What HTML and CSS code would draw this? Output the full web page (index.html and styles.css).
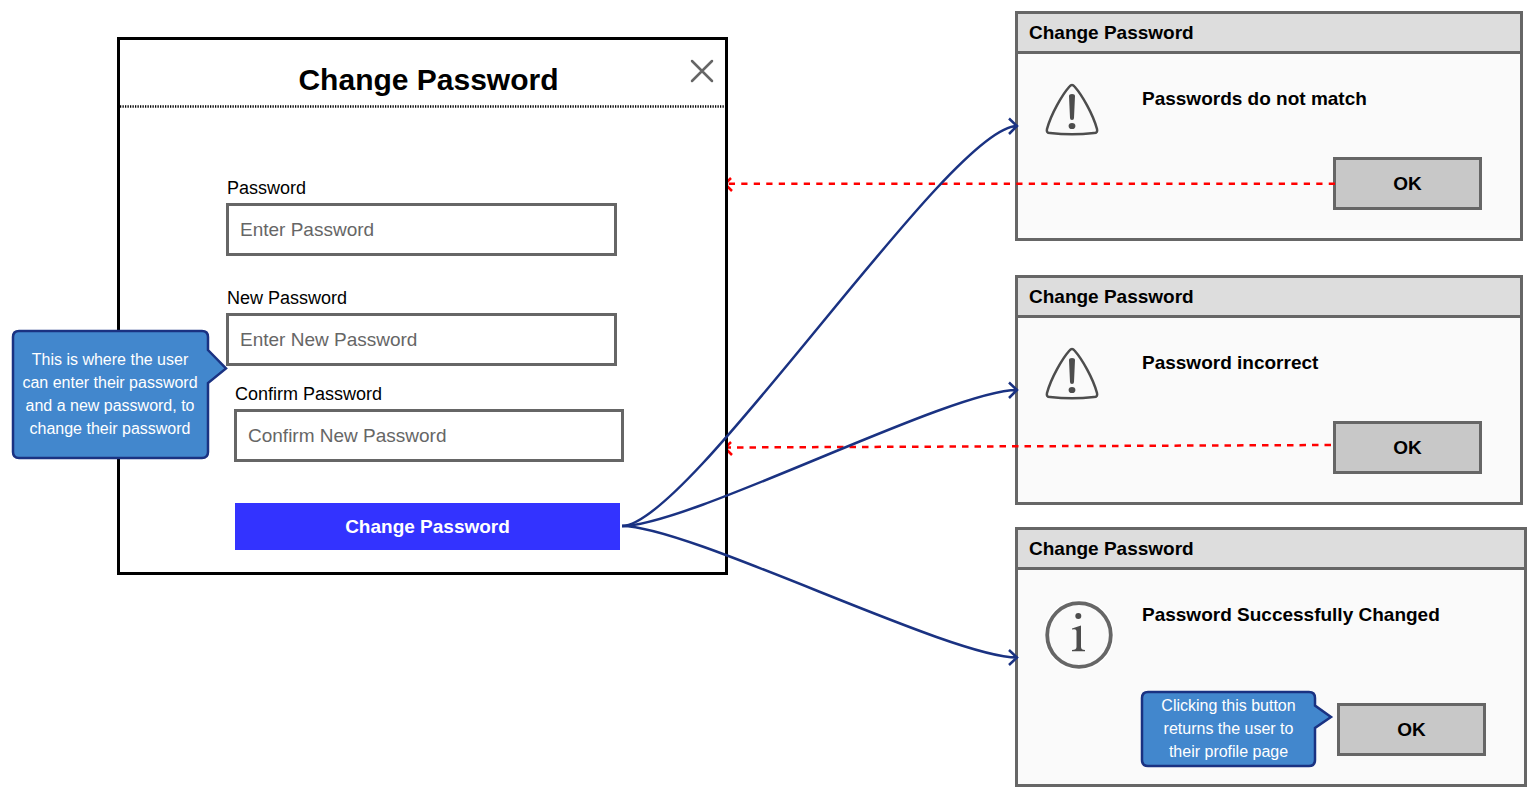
FILE: index.html
```html
<!DOCTYPE html>
<html lang="en">
<head>
<meta charset="utf-8">
<title>Change Password</title>
<link rel="stylesheet" href="styles.css">
</head>
<body>
<main class="canvas">
  <section class="alert alert-mismatch">
    <h2 class="alert-title">Change Password</h2>
    <div class="alert-body">
      <div class="alert-row">
        <svg class="icon" width="54" height="54" viewBox="0 0 54 54" aria-hidden="true">
          <path d="M24.500 3.500Q27 .500 29.500 3.500C37 12 48 31 52 46Q53 50 49 50Q27 52.500 5 50Q1 50 2 46C6 31 17 12 24.500 3.500Z" fill="#fafafa" stroke="#4d4d4d" stroke-width="2.500"/>
          <path d="M24 13Q24 11 27 11Q30 11 30 13L29 35Q29 37 27 37Q25 37 25 35Z" fill="#4d4d4d"/>
          <ellipse cx="27" cy="43" rx="3.400" ry="3.100" fill="#4d4d4d"/>
        </svg>
        <p class="message">Passwords do not match</p>
      </div>
      <button class="ok" type="button">OK</button>
    </div>
  </section>

  <section class="alert alert-incorrect">
    <h2 class="alert-title">Change Password</h2>
    <div class="alert-body">
      <div class="alert-row">
        <svg class="icon" width="54" height="54" viewBox="0 0 54 54" aria-hidden="true">
          <path d="M24.500 3.500Q27 .500 29.500 3.500C37 12 48 31 52 46Q53 50 49 50Q27 52.500 5 50Q1 50 2 46C6 31 17 12 24.500 3.500Z" fill="#fafafa" stroke="#4d4d4d" stroke-width="2.500"/>
          <path d="M24 13Q24 11 27 11Q30 11 30 13L29 35Q29 37 27 37Q25 37 25 35Z" fill="#4d4d4d"/>
          <ellipse cx="27" cy="43" rx="3.400" ry="3.100" fill="#4d4d4d"/>
        </svg>
        <p class="message">Password incorrect</p>
      </div>
      <button class="ok" type="button">OK</button>
    </div>
  </section>

  <section class="alert alert-success">
    <h2 class="alert-title">Change Password</h2>
    <div class="alert-body">
      <div class="alert-row">
        <svg class="icon" width="70" height="72" viewBox="0 0 70 72" aria-hidden="true">
          <circle cx="34" cy="36" r="35" fill="#fff"/>
          <circle cx="34" cy="36" r="31.800" fill="#fafafa" stroke="#666" stroke-width="3.800"/>
          <circle cx="33.300" cy="17" r="3" fill="#4d4d4d"/>
          <path d="M27 29.500L36 26.500V48Q36 51 40 51V52.200H27V51Q31.500 51 31.500 48V32Q31.500 29.500 27 30.500Z" fill="#4d4d4d"/>
        </svg>
        <p class="message">Password Successfully Changed</p>
      </div>
      <button class="ok" type="button">OK</button>
    </div>
  </section>

  <svg class="wires" width="1540" height="800" viewBox="0 0 1540 800" aria-hidden="true">
    <g fill="none" stroke="#f00" stroke-width="2.500">
      <path d="M1335 183.800H726" stroke-dasharray="6.250 6.250"/>
      <path d="M731 178L725 184L732 191"/>
      <path d="M1331 445L726 447.500" stroke-dasharray="6.500 6"/>
      <path d="M731 442L725 448L732 455"/>
    </g>
  </svg>

  <section class="dialog">
    <header class="dialog-header">
      <h1 class="dialog-title">Change Password</h1>
      <button class="close" type="button" aria-label="Close">
        <svg width="24" height="24" viewBox="0 0 24 24" aria-hidden="true"><path d="M2 2L22 22M22 2L2 22" stroke="#666" stroke-width="2.500" stroke-linecap="round"/></svg>
      </button>
    </header>
    <svg class="rule" width="100%" height="3" aria-hidden="true"><path d="M0 1.500H4000" stroke="#000" stroke-width="2.500" stroke-dasharray="1.250 1.250"/></svg>
    <form class="form">
      <div class="field">
        <label for="current">Password</label>
        <input id="current" type="password" placeholder="Enter Password">
      </div>
      <div class="field field-new">
        <label for="new">New Password</label>
        <input id="new" type="password" placeholder="Enter New Password">
      </div>
      <div class="field field-confirm">
        <label for="confirm">Confirm Password</label>
        <input id="confirm" type="password" placeholder="Confirm New Password">
      </div>
      <button class="submit" type="button">Change Password</button>
    </form>
  </section>

  <svg class="wires" width="1540" height="800" viewBox="0 0 1540 800" aria-hidden="true">
    <g fill="none" stroke="#1a3282" stroke-width="2.500">
      <path d="M622 526C689 526 950 126 1017 126M1009 118.500L1017 126L1009 134"/>
      <path d="M622 526C689 526 950 390 1017 390M1009 382.500L1017 390L1009 398"/>
      <path d="M622 526C689 526 950 657.500 1017 657.500M1009 650L1017 657.500L1009 665"/>
    </g>
  </svg>

  <aside class="callout callout-form">
    <svg class="bubble" width="218" height="132" viewBox="0 0 218 132" aria-hidden="true">
      <path d="M8 2H191Q197 2 197 8V21L215 39.500L197 54V123Q197 129 191 129H8Q2 129 2 123V8Q2 2 8 2Z" fill="#4287cd" stroke="#1a3282" stroke-width="2.500"/>
    </svg>
    <p>This is where the user can enter their password and a new password, to change their password</p>
  </aside>

  <aside class="callout callout-ok">
    <svg class="bubble" width="196" height="79" viewBox="0 0 196 79" aria-hidden="true">
      <path d="M8 2H169Q175 2 175 8V15.500L191 27L175 38V70Q175 76 169 76H8Q2 76 2 70V8Q2 2 8 2Z" fill="#4287cd" stroke="#1a3282" stroke-width="2.500"/>
    </svg>
    <p>Clicking this button returns the user to their profile page</p>
  </aside>
</main>
</body>
</html>
```
FILE: styles.css
```css
* {
  box-sizing: border-box;
}

body {
  margin: 0;
  background: #fff;
  color: #000;
  font-family: "Liberation Sans", Arial, sans-serif;
}

h1, h2, p {
  margin: 0;
}

button, input {
  font-family: inherit;
}

.canvas {
  position: relative;
  min-height: 800px;
  overflow: hidden;
}

.wires {
  position: absolute;
  left: 0;
  top: 0;
  pointer-events: none;
}

/* Main dialog */
.dialog {
  position: absolute;
  left: 117px;
  top: 37px;
  width: 611px;
  border: 3px solid #000;
  background: #fff;
}

.dialog-header {
  display: grid;
  grid-template-columns: 1fr 24px;
  align-items: center;
  height: 65px;
  padding: 0 11px 3px 47px;
}

.dialog-title {
  padding-top: 18px;
  font-size: 30px;
  line-height: 34px;
  text-align: center;
}

.close {
  display: flex;
  padding: 0;
  border: 0;
  background: none;
}

.rule {
  display: block;
}

.form {
  display: flex;
  flex-direction: column;
  padding: 69px 108px 22px 106px;
}

.field {
  display: flex;
  flex-direction: column;
  gap: 4px;
}

.field-new {
  margin-top: 31px;
}

.field-confirm {
  margin: 17px -7px 0 8px;
}

.field label {
  padding-left: 1px;
  font-size: 18px;
  line-height: 22px;
}

.field input {
  width: 100%;
  height: 53px;
  padding: 0 11px;
  border: 3px solid #666;
  background: #fff;
  color: #000;
  font-size: 19px;
}

.field input::placeholder {
  color: #666;
  opacity: 1;
}

.submit {
  height: 47px;
  margin: 41px -3px 0 9px;
  border: 0;
  background: #33f;
  color: #fff;
  font-size: 19px;
  font-weight: bold;
}

/* Alert boxes */
.alert {
  position: absolute;
  left: 1015px;
  display: flex;
  flex-direction: column;
  width: 508px;
  min-height: 230px;
  border: 3px solid #666;
  background: #fafafa;
}

.alert-mismatch {
  top: 11px;
}

.alert-incorrect {
  top: 275px;
}

.alert-success {
  top: 527px;
  width: 512px;
  min-height: 260px;
}

.alert-title {
  padding: 7px 11px;
  border-bottom: 3px solid #666;
  background: #ddd;
  font-size: 19px;
  line-height: 23px;
}

.alert-body {
  flex: 1;
  display: flex;
  flex-direction: column;
  justify-content: space-between;
  padding: 29px 38px 28px 27px;
}

.alert-row {
  display: grid;
  grid-template-columns: 97px 1fr;
}

.message {
  padding-top: 5px;
  font-size: 19px;
  line-height: 22px;
  font-weight: bold;
}

.ok {
  align-self: flex-end;
  width: 149px;
  height: 53px;
  border: 3px solid #666;
  background: #c8c8c8;
  color: #000;
  font-size: 19px;
  font-weight: bold;
}

/* Callouts */
.callout {
  position: absolute;
  display: flex;
  align-items: center;
  justify-content: center;
  color: #fff;
  font-size: 16px;
  line-height: 23px;
  text-align: center;
}

.callout p {
  position: relative;
}

.bubble {
  position: absolute;
  left: 0;
  top: 0;
}

.callout-form {
  left: 11px;
  top: 329px;
  width: 198px;
  height: 129px;
  padding: 0 8px;
}

.callout-ok {
  left: 1140px;
  top: 690px;
  width: 177px;
  height: 77px;
  padding: 0 18px;
}
```
